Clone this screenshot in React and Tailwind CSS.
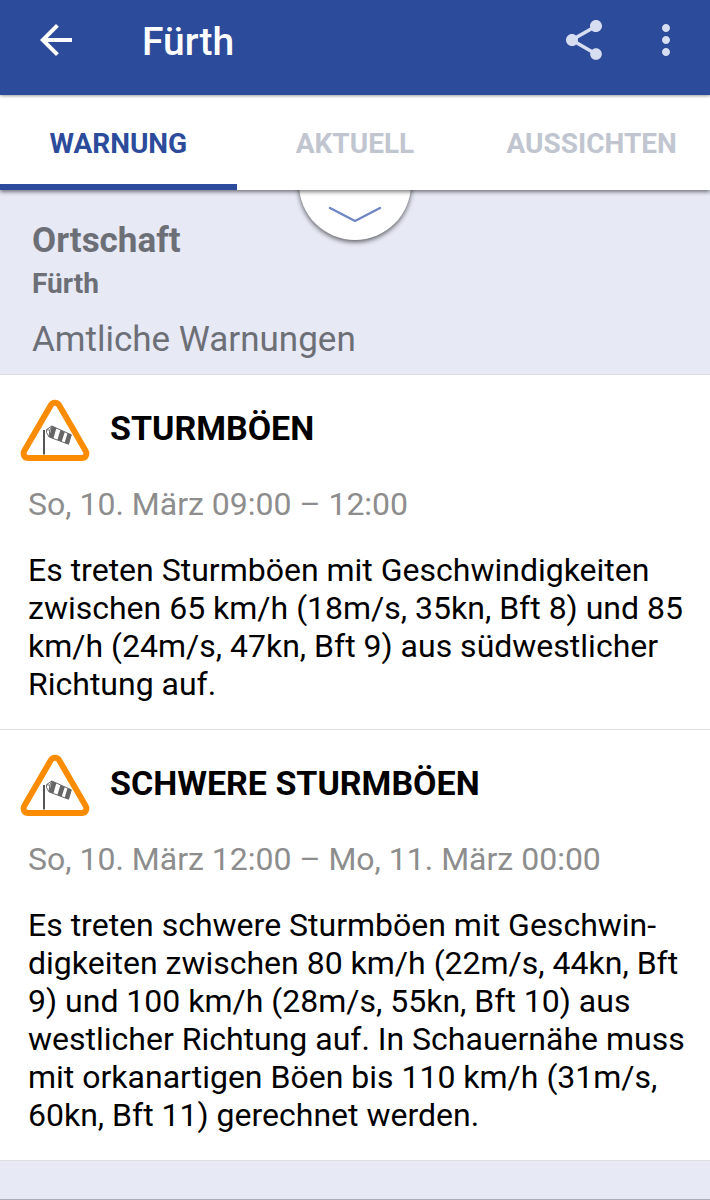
import { useState } from "react";
import { MdArrowBack, MdMoreVert, MdShare } from "react-icons/md";

const tabs = ["WARNUNG", "AKTUELL", "AUSSICHTEN"];

const warnings = [
  {
    title: "STURMBÖEN",
    time: "So, 10. März 09:00 – 12:00",
    text: "Es treten Sturmböen mit Geschwindigkeiten zwischen 65 km/h (18m/s, 35kn, Bft 8) und 85 km/h (24m/s, 47kn, Bft 9) aus südwestlicher Richtung auf.",
  },
  {
    title: "SCHWERE STURMBÖEN",
    time: "So, 10. März 12:00 – Mo, 11. März 00:00",
    text: "Es treten schwere Sturmböen mit Geschwin\u00ADdigkeiten zwischen 80 km/h (22m/s, 44kn, Bft 9) und 100 km/h (28m/s, 55kn, Bft 10) aus westlicher Richtung auf. In Schauernähe muss mit orkanartigen Böen bis 110 km/h (31m/s, 60kn, Bft 11) gerechnet werden.",
  },
];

function WindsockIcon() {
  return (
    <svg className="h-[62px] w-[70px] shrink-0" viewBox="0 0 70 62" fill="none" aria-hidden="true">
      <path
        d="M30.8 6.2 L4.5 51.6 C2.4 55.4 4.4 59 8.4 59 L61.6 59 C65.6 59 67.6 55.4 65.5 51.6 L39.2 6.2 C37.2 2.8 32.8 2.8 30.8 6.2 Z"
        stroke="#fb8c00"
        strokeWidth="6"
        strokeLinejoin="round"
      />
      <path d="M24 31 V55.5" stroke="#555" strokeWidth="2" />
      <path
        d="M26.5 33.5 L26.7 30.5 L31.8 27 L51.3 35.8 L48.5 45.2 L29.2 38 Z"
        fill="#fff"
        stroke="#666"
        strokeWidth="1"
        strokeLinejoin="round"
      />
      <path d="M26.7 30.5 L29.8 31.4 L29.2 38 M29.8 31.4 L31.8 27" stroke="#666" strokeWidth="1" />
      <path
        d="M31.8 27 L36.4 29 L33.4 39.6 L29.2 38 Z M40.4 30.9 L44.8 32.9 L41.6 42.7 L37.4 41.1 Z M47.6 34.1 L51.3 35.8 L48.5 45.2 L44.6 43.8 Z"
        fill="#666"
      />
    </svg>
  );
}

export default function App() {
  const [active, setActive] = useState("WARNUNG");
  return (
    <div className="flex min-h-screen flex-col border-b border-[#a9abb5] bg-[#e7e9f5] font-['Roboto',sans-serif] text-black">
      <header className="relative z-20 flex items-center bg-[#2c4b9b] pt-4 pr-5 pb-[31px] pl-8 text-white shadow-[0_1px_3px_rgba(0,0,0,0.4)]">
        <button type="button" aria-label="Zurück">
          <MdArrowBack size={48} />
        </button>
        <h1 className="ml-[62px] flex-1 pt-1 text-[39px] leading-[44px] font-medium">Fürth</h1>
        <div className="flex gap-[34px] text-[#d8def1]">
          <button type="button" aria-label="Teilen">
            <MdShare size={48} />
          </button>
          <button type="button" aria-label="Mehr">
            <MdMoreVert size={48} />
          </button>
        </div>
      </header>

      <div className="relative">
        <nav className="relative z-10 grid grid-cols-3 bg-white shadow-[0_2px_4px_rgba(0,0,0,0.5)]">
          {tabs.map((tab) => (
            <button
              key={tab}
              type="button"
              onClick={() => setActive(tab)}
              className={
                "border-b-6 pt-[33px] pb-6 text-[28px] leading-8 font-bold " +
                (tab === active
                  ? "border-[#2c4b9b] text-[#2c4b9b]"
                  : "border-transparent text-[#c0c5d0]")
              }
            >
              {tab}
            </button>
          ))}
        </nav>
        <button
          type="button"
          aria-label="Ausklappen"
          className="absolute -bottom-[50px] left-1/2 flex size-28 -translate-x-1/2 items-end justify-center rounded-full bg-white pb-4 shadow-[0_2px_5px_rgba(0,0,0,0.6)]"
        >
          <svg className="h-[18px] w-[54px]" viewBox="0 0 54 18" fill="none">
            <path d="M2 2 L27 15 L52 2" stroke="#6f86c4" strokeWidth="2.4" strokeLinecap="round" />
          </svg>
        </button>
      </div>

      <section className="border-b border-[#dddee6] px-8 pt-[30px] pb-[13px] text-[#6d6f77]">
        <h2 className="text-[35px] leading-[42px] font-bold">Ortschaft</h2>
        <p className="mt-[3px] text-[28px] leading-[38px] font-bold">Fürth</p>
        <h2 className="mt-4 text-[35px] leading-[42px]">Amtliche Warnungen</h2>
      </section>

      <main className="bg-white">
        {warnings.map((w) => (
          <article
            key={w.title}
            className="border-b border-[#dfdfe3] pt-6 pr-5 pb-[26px] pl-7 text-[32px] leading-[38px]"
          >
            <div className="-ml-2 flex items-center gap-5">
              <WindsockIcon />
              <h3 className="pb-1 text-[34px] font-bold">{w.title}</h3>
            </div>
            <p className="mt-6 text-[#8d8d8d]">{w.time}</p>
            <p className="mt-7">{w.text}</p>
          </article>
        ))}
      </main>
    </div>
  );
}
